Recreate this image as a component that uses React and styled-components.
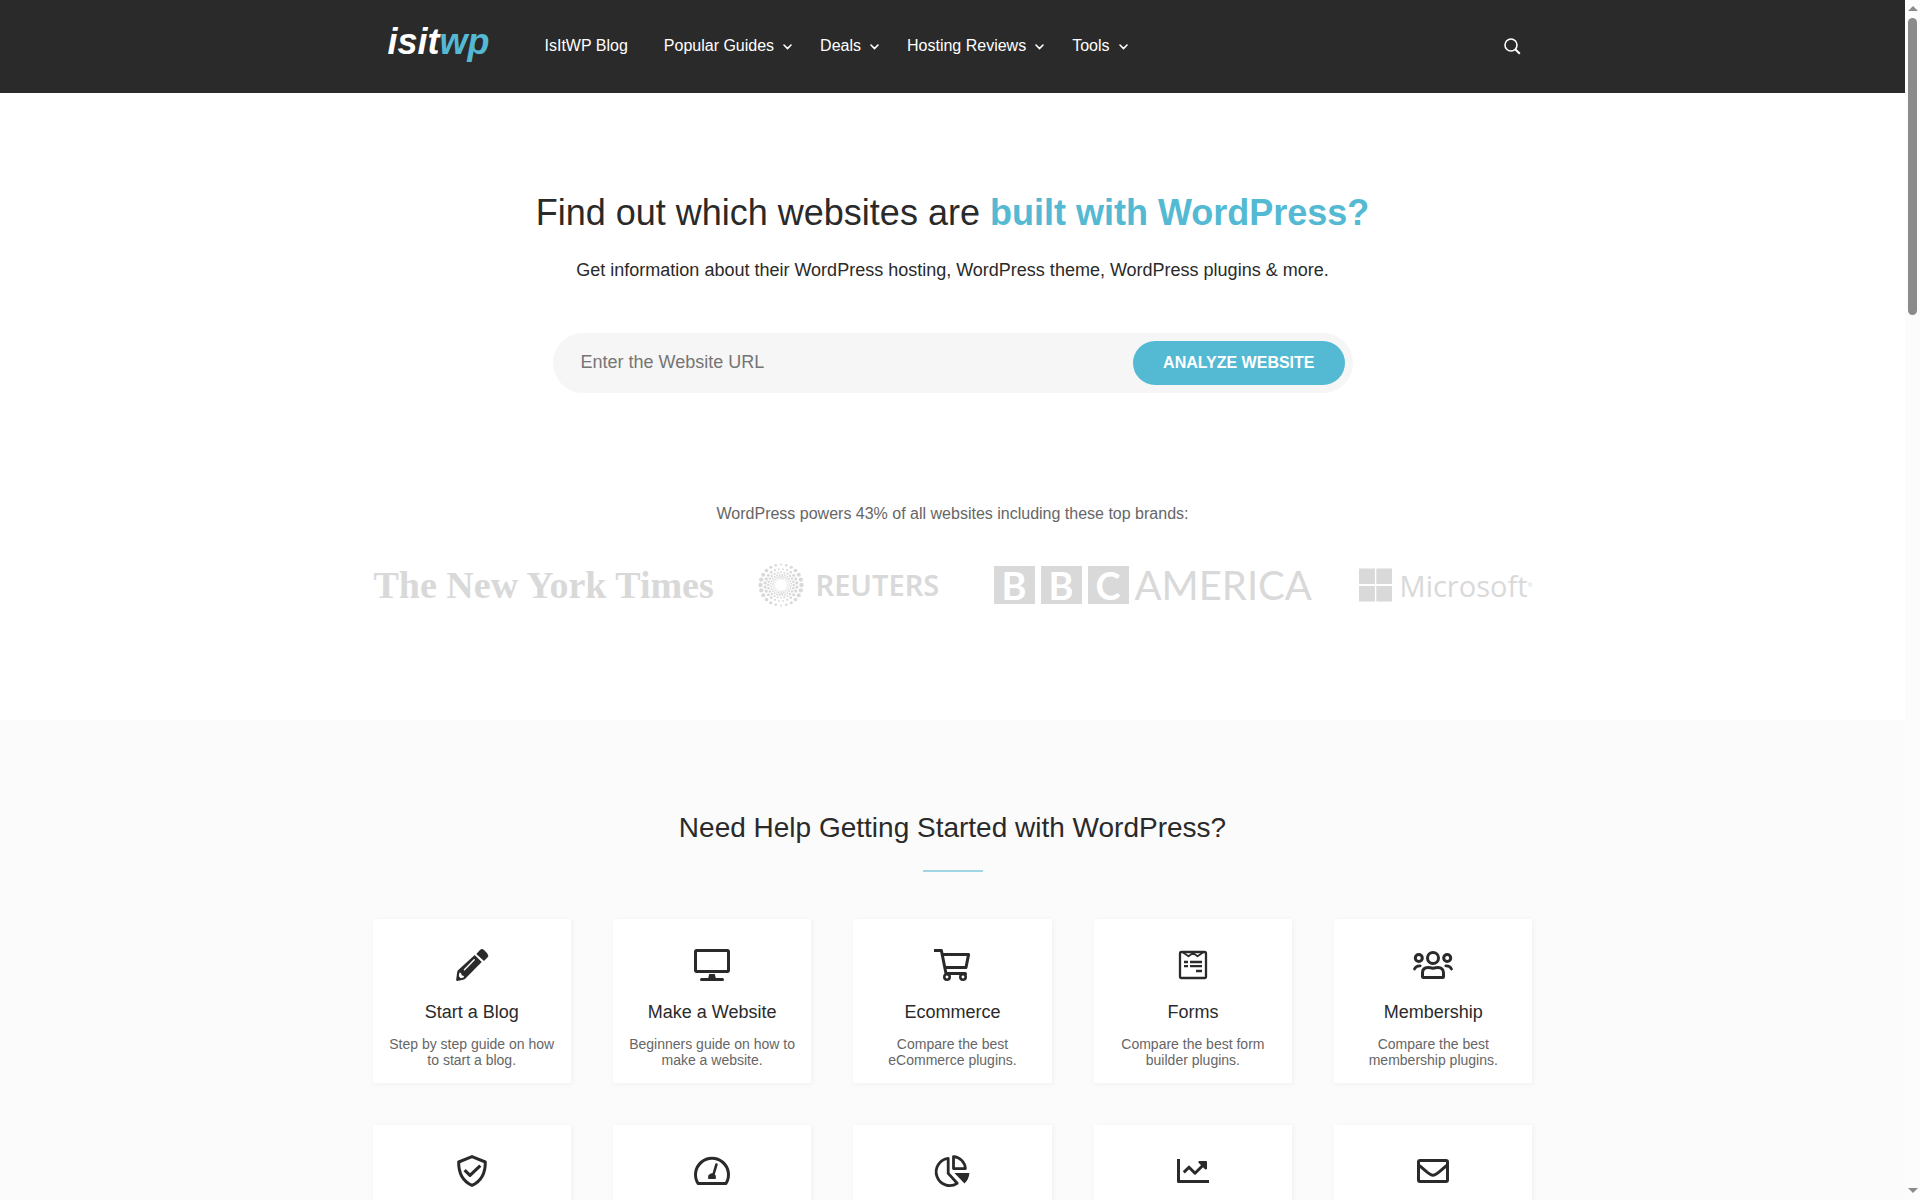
import styled, { createGlobalStyle } from "styled-components"

const GlobalStyle = createGlobalStyle`
  *, *::before, *::after {
    box-sizing: border-box;
  }
  body {
    margin: 0;
    background: #fff;
    color: #2a2a2a;
    font-family: "Liberation Sans", Arial, sans-serif;
    font-size: 16px;
  }
  h1, h2, h3, p, ul {
    margin: 0;
    padding: 0;
    font-weight: 400;
  }
`

const Window = styled.div`
  display: flex;
  height: 100vh;
  overflow: hidden;
`
const Page = styled.div`
  flex: 1;
  min-width: 0;
`
const ScrollBar = styled.div`
  display: flex;
  flex-direction: column;
  align-items: center;
  width: 15px;
  padding: 6px 0 7px;
  background: #fcfcfc;
`
const ScrollArrow = styled.span`
  width: 0;
  height: 0;
  border: 0 solid transparent;
  border-width: ${props => props.$down ? '5px 5px 0' : '0 5px 5px'};
  border-top-color: ${props => props.$down ? '#8b8b8b' : 'transparent'};
  border-bottom-color: ${props => props.$down ? 'transparent' : '#8b8b8b'};
`
const ScrollTrack = styled.div`
  flex: 1;
  width: 9px;
  padding: 7px 0;
`
const ScrollThumb = styled.div`
  height: 25.5%;
  border-radius: 5px;
  background: #8b8b8b;
`

const Header = styled.header`
  background: #2a2a2a;
`
const HeaderInner = styled.div`
  display: flex;
  align-items: center;
  max-width: 1160px;
  height: 93px;
  margin: 0 auto;
  padding: 0 12px 0 15px;
`
const Logo = styled.a`
  margin-right: 55px;
  padding-bottom: 10px;
  color: #fff;
  font-size: 36px;
  font-style: italic;
  font-weight: 700;
  line-height: 42px;
  text-decoration: none;
  span {
    color: #54b9d3;
  }
`
const Nav = styled.nav`
  display: flex;
  flex: 1;
  gap: 28px;
  padding-bottom: 2px;
`
const NavLink = styled.a`
  display: flex;
  align-items: center;
  gap: 9px;
  padding-right: ${props => props.$menu ? 0 : '8px'};
  color: #fff;
  line-height: 20px;
  text-decoration: none;
  svg {
    margin-top: 2px;
  }
`
const SearchButton = styled.button`
  display: flex;
  padding: 0;
  border: 0;
  background: none;
  cursor: pointer;
`

const Hero = styled.section`
  display: flex;
  flex-direction: column;
  align-items: center;
  padding: 97px 0 105px;
  text-align: center;
`
const HeroTitle = styled.h1`
  font-size: 36px;
  line-height: 46px;
  strong {
    color: #54b9d3;
  }
`
const HeroText = styled.p`
  margin-top: 23px;
  font-size: 18px;
  line-height: 22px;
`
const SearchForm = styled.form`
  display: flex;
  align-items: center;
  width: 100%;
  max-width: 800px;
  margin-top: 52px;
  padding: 8px;
  border-radius: 30px;
  background: #f6f6f6;
`
const UrlInput = styled.input`
  flex: 1;
  min-width: 0;
  padding: 0 20px 2px;
  border: 0;
  outline: 0;
  background: none;
  font-family: inherit;
  font-size: 18px;
  &::placeholder {
    color: #757575;
  }
`
const AnalyzeButton = styled.button`
  height: 44px;
  padding: 0 30px;
  border: 0;
  border-radius: 22px;
  background: #54b9d3;
  color: #fff;
  font-family: inherit;
  font-size: 16px;
  font-weight: 700;
  cursor: pointer;
`
const BrandsText = styled.p`
  margin-top: 110px;
  color: #666;
  line-height: 22px;
`
const Brands = styled.div`
  display: grid;
  grid-template-columns: 384fr 236fr 365fr 174fr;
  align-items: center;
  width: 100%;
  max-width: 1160px;
  height: 60px;
  margin-top: 30px;
  padding-left: 1px;
  color: #d9d9d9;
`
const Brand = styled.div`
  display: flex;
  align-items: center;
  min-width: 0;
  gap: ${props => props.$gap || '8px'};
  white-space: nowrap;
`
const TimesName = styled.span`
  font-family: "Liberation Serif", "Times New Roman", serif;
  font-size: 38px;
  font-weight: 700;
  line-height: 50px;
`
const ReutersName = styled.span`
  font-family: "Noto Sans", sans-serif;
  font-size: 29px;
  font-weight: 600;
  line-height: 40px;
`
const BbcLetter = styled.span`
  width: 41px;
  height: 38px;
  background: #d9d9d9;
  color: #fff;
  font-family: Lato, sans-serif;
  font-size: 38px;
  font-weight: 700;
  line-height: 38px;
`
const AmericaName = styled.span`
  font-family: Lato, sans-serif;
  font-size: 40px;
  line-height: 38px;
`
const MicrosoftName = styled.span`
  font-family: "Open Sans", sans-serif;
  font-size: 29px;
  line-height: 40px;
  small {
    font-size: 6px;
    vertical-align: 10px;
  }
`

const Help = styled.section`
  padding: 90px 0;
  background: #fbfbfb;
`
const HelpTitle = styled.h2`
  font-size: 28px;
  line-height: 36px;
  text-align: center;
  &::after {
    display: block;
    width: 60px;
    height: 2px;
    margin: 24px auto 0;
    background: #9fd6e4;
    content: "";
  }
`
const Cards = styled.div`
  display: grid;
  grid-template-columns: repeat(5, 1fr);
  gap: 42px;
  max-width: 1160px;
  margin: 47px auto 0;
`
const Card = styled.a`
  display: flex;
  flex-direction: column;
  align-items: center;
  min-height: 164px;
  padding: 30px 14px 13px;
  background: #fff;
  box-shadow: 1px 1px 5px rgba(0, 0, 0, 0.05);
  color: #2a2a2a;
  text-align: center;
  text-decoration: none;
`
const CardTitle = styled.h3`
  margin-top: 20px;
  font-size: 18px;
  line-height: 22px;
`
const CardText = styled.p`
  margin-top: 13px;
  color: #666;
  font-size: 14px;
  line-height: 16px;
`
const CardIcon = styled.svg`
  display: block;
  width: 40px;
  height: 32px;
  overflow: visible;
  fill: none;
  stroke: #2a2a2a;
  stroke-width: 3;
  stroke-linejoin: round;
  .solid {
    fill: #2a2a2a;
    stroke: none;
  }
  .light {
    stroke: #fff;
  }
`

const icons = {
  pencil: (
    <>
      <path className="solid" d="M4.3 -11L8 -15Q10 -17 12 -15L15.2 -11.8Q17 -9.5 15.4 -7.4L12 -4Z" />
      <path className="solid" d="M2.7 -10L9.7 -3L-6.3 13.3Q-7 14 -8 14.4L-14.8 16Q-16.2 16 -15.8 14.6L-14.7 6.6Q-14.5 5.8 -14 5.2Z" />
      <path className="light" strokeWidth="1.4" strokeLinecap="round" d="M2.2 -5.2L-7.6 4.8" />
      <path d="M-12.6 7.5L-11 8L-10.3 10.2L-8.2 11L-8 12.2L-11.2 13.2L-13.2 11.3Z" fill="#fff" stroke="none" />
    </>
  ),
  monitor: (
    <>
      <rect x="-16.5" y="-14.5" width="33" height="21" rx="1.2" />
      <path className="solid" d="M-2.8 9H2.8L4 14H-4Z" />
      <path strokeLinecap="round" d="M-10.5 14.5H10.5" />
    </>
  ),
  cart: (
    <>
      <path d="M-18 -14.5H-10.6L-6 8.5H13.4V10M-9.6 -10.6H16.6L14 2.5H-7" />
      <circle cx="-5" cy="12" r="2.7" strokeWidth="2.6" />
      <circle cx="11" cy="12" r="2.7" strokeWidth="2.6" />
    </>
  ),
  form: (
    <>
      <rect x="-13" y="-13" width="26" height="26" rx="1.5" strokeWidth="2.3" />
      <path strokeWidth="1.7" d="M-10 -12.5L-4.5 -8.7L0 -12L4.5 -8.7L10 -12.5" />
      <path strokeWidth="2.3" d="M-9 -3H-5M-3 -3H9M-9 1.2H-5M-3 1.2H9M3 6H9" />
    </>
  ),
  users: (
    <>
      <circle cy="-7" r="5.5" />
      <circle cx="-14.2" cy="-7" r="3.5" />
      <circle cx="14.2" cy="-7" r="3.5" />
      <path d="M-9.5 12.5H9.5Q10.5 12.5 10.5 11.5V8Q10.5 2.6 5 2.6Q3 2.6 0 3.2Q-3 2.6 -5 2.6Q-10.5 2.6 -10.5 8V11.5Q-10.5 12.5 -9.5 12.5Z" />
      <path strokeLinecap="round" strokeWidth="2.8" d="M-18.5 4Q-17 0.6 -12.8 0.8M18.5 4Q17 0.6 12.8 0.8" />
    </>
  ),
  shield: (
    <>
      <path d="M0 -14.4L13.3 -9C13.5 3 8 10.8 0 14.4C-8 10.8 -13.5 3 -13.3 -9Z" />
      <path strokeWidth="3.2" d="M-7.4 -0.8L-2 4.4L8.3 -5.3" />
    </>
  ),
  gauge: (
    <>
      <path d="M-14 12.5A16.5 16.5 0 1 1 14 12.5Z" />
      <path strokeLinecap="round" strokeWidth="2.6" d="M4.4 -6.4L1.3 4" />
      <path className="solid" d="M-3.6 8A4 4 0 1 1 3.6 8Z" />
    </>
  ),
  pie: (
    <>
      <path strokeWidth="2.8" d="M-3.8 -12.6V2.4L5.2 12.3A13.6 13.6 0 1 1 -3.8 -12.6Z" />
      <path strokeWidth="2.8" d="M1.5 -14.3V-2.4H13.4A12.6 12.6 0 0 0 1.5 -14.3Z" />
      <path className="solid" d="M2.4 2H17.4Q17 8.2 12.5 12.4Z" />
    </>
  ),
  chart: (
    <>
      <path d="M-14.5 -12V10.5H16" />
      <path d="M-9.2 1.4L-4 -3.8L2 2.2L10.5 -6.3" />
      <path className="solid" d="M6 -10H13Q14 -10 14 -9V-2.2Q13.2 -0.8 12 -1.8L5.6 -8.2Q4.8 -9.4 6 -10Z" />
    </>
  ),
  mail: (
    <>
      <rect x="-14.5" y="-10.5" width="29" height="21" rx="1.5" />
      <path d="M-14.5 -6C-7 -0.5 -3.5 4.3 0 4.3S7 -0.5 14.5 -6" />
    </>
  ),
}

const navItems = [
  { label: 'IsItWP Blog' },
  { label: 'Popular Guides', menu: true },
  { label: 'Deals', menu: true },
  { label: 'Hosting Reviews', menu: true },
  { label: 'Tools', menu: true },
]

const cards = [
  { icon: 'pencil', title: 'Start a Blog', text: 'Step by step guide on how to start a blog.' },
  { icon: 'monitor', title: 'Make a Website', text: 'Beginners guide on how to make a website.' },
  { icon: 'cart', title: 'Ecommerce', text: 'Compare the best eCommerce plugins.' },
  { icon: 'form', title: 'Forms', text: 'Compare the best form builder plugins.' },
  { icon: 'users', title: 'Membership', text: 'Compare the best membership plugins.' },
  { icon: 'shield' },
  { icon: 'gauge' },
  { icon: 'pie' },
  { icon: 'chart' },
  { icon: 'mail' },
]

// rings of the Reuters mark, from the outside in
const rings = [
  { radius: 20.5, side: 2.2, top: 1 },
  { radius: 16, side: 1.7, top: 0.8 },
  { radius: 12.8, side: 1.3, top: 0.9 },
  { radius: 10.2, side: 0.9, top: 1 },
  { radius: 8.2, side: 0.7, top: 0.9 },
  { radius: 6.4, side: 0.5, top: 0.6 },
]

function ReutersMark() {
  const dots = rings.flatMap((ring, n) =>
    Array.from({ length: 24 }, (_, i) => {
      const angle = (i + (n % 2) / 2) * Math.PI / 12
      const size = ring.top + (ring.side - ring.top) * Math.abs(Math.cos(angle))
      return (
        <circle
          key={`${n}-${i}`}
          cx={(ring.radius * Math.cos(angle)).toFixed(2)}
          cy={(ring.radius * Math.sin(angle)).toFixed(2)}
          r={size.toFixed(2)}
        />
      )
    })
  )
  return <svg width="46" height="46" viewBox="-23 -23 46 46" fill="currentColor">{dots}</svg>
}

function Chevron() {
  return (
    <svg width="9" height="6" viewBox="0 0 9 6" fill="none" stroke="#fff" strokeWidth="1.6" strokeLinecap="round">
      <path d="M1 1L4.5 4.5L8 1" />
    </svg>
  )
}

export default function App() {

  return (
    <Window>
      <GlobalStyle />
      <Page>
        <Header>
          <HeaderInner>
            <Logo href="#">isit<span>wp</span></Logo>
            <Nav>
              {navItems.map(item => (
                <NavLink key={item.label} href="#" $menu={item.menu}>
                  {item.label}
                  {item.menu && <Chevron />}
                </NavLink>
              ))}
            </Nav>
            <SearchButton type="button" aria-label="Search">
              <svg width="17" height="17" viewBox="0 0 17 17" fill="none" stroke="#fff">
                <circle cx="7" cy="7" r="6" strokeWidth="1.6" />
                <path d="M11.2 11.2L15.8 15.8" strokeWidth="2" />
              </svg>
            </SearchButton>
          </HeaderInner>
        </Header>
        <Hero>
          <HeroTitle>Find out which websites are <strong>built with WordPress?</strong></HeroTitle>
          <HeroText>Get information about their WordPress hosting, WordPress theme, WordPress plugins &amp; more.</HeroText>
          <SearchForm>
            <UrlInput type="text" aria-label="Enter the Website URL" placeholder="Enter the Website URL" />
            <AnalyzeButton type="button">ANALYZE WEBSITE</AnalyzeButton>
          </SearchForm>
          <BrandsText>WordPress powers 43% of all websites including these top brands:</BrandsText>
          <Brands>
            <Brand>
              <TimesName>The New York Times</TimesName>
            </Brand>
            <Brand $gap="12px">
              <ReutersMark />
              <ReutersName>REUTERS</ReutersName>
            </Brand>
            <Brand $gap="6px">
              <BbcLetter>B</BbcLetter>
              <BbcLetter>B</BbcLetter>
              <BbcLetter>C</BbcLetter>
              <AmericaName>AMERICA</AmericaName>
            </Brand>
            <Brand>
              <svg width="34" height="34" viewBox="0 0 34 34" fill="currentColor">
                <path d="M0 0H16.4V16H0ZM17.8 0H34V16H17.8ZM0 18H16.4V34H0ZM17.8 18H34V34H17.8Z" />
              </svg>
              <MicrosoftName>Microsoft<small>®</small></MicrosoftName>
            </Brand>
          </Brands>
        </Hero>
        <Help>
          <HelpTitle>Need Help Getting Started with WordPress?</HelpTitle>
          <Cards>
            {cards.map(card => (
              <Card key={card.icon} href="#">
                <CardIcon viewBox="-20 -16 40 32">{icons[card.icon]}</CardIcon>
                {card.title && <CardTitle>{card.title}</CardTitle>}
                {card.text && <CardText>{card.text}</CardText>}
              </Card>
            ))}
          </Cards>
        </Help>
      </Page>
      <ScrollBar>
        <ScrollArrow />
        <ScrollTrack>
          <ScrollThumb />
        </ScrollTrack>
        <ScrollArrow $down />
      </ScrollBar>
    </Window>
  )
}
